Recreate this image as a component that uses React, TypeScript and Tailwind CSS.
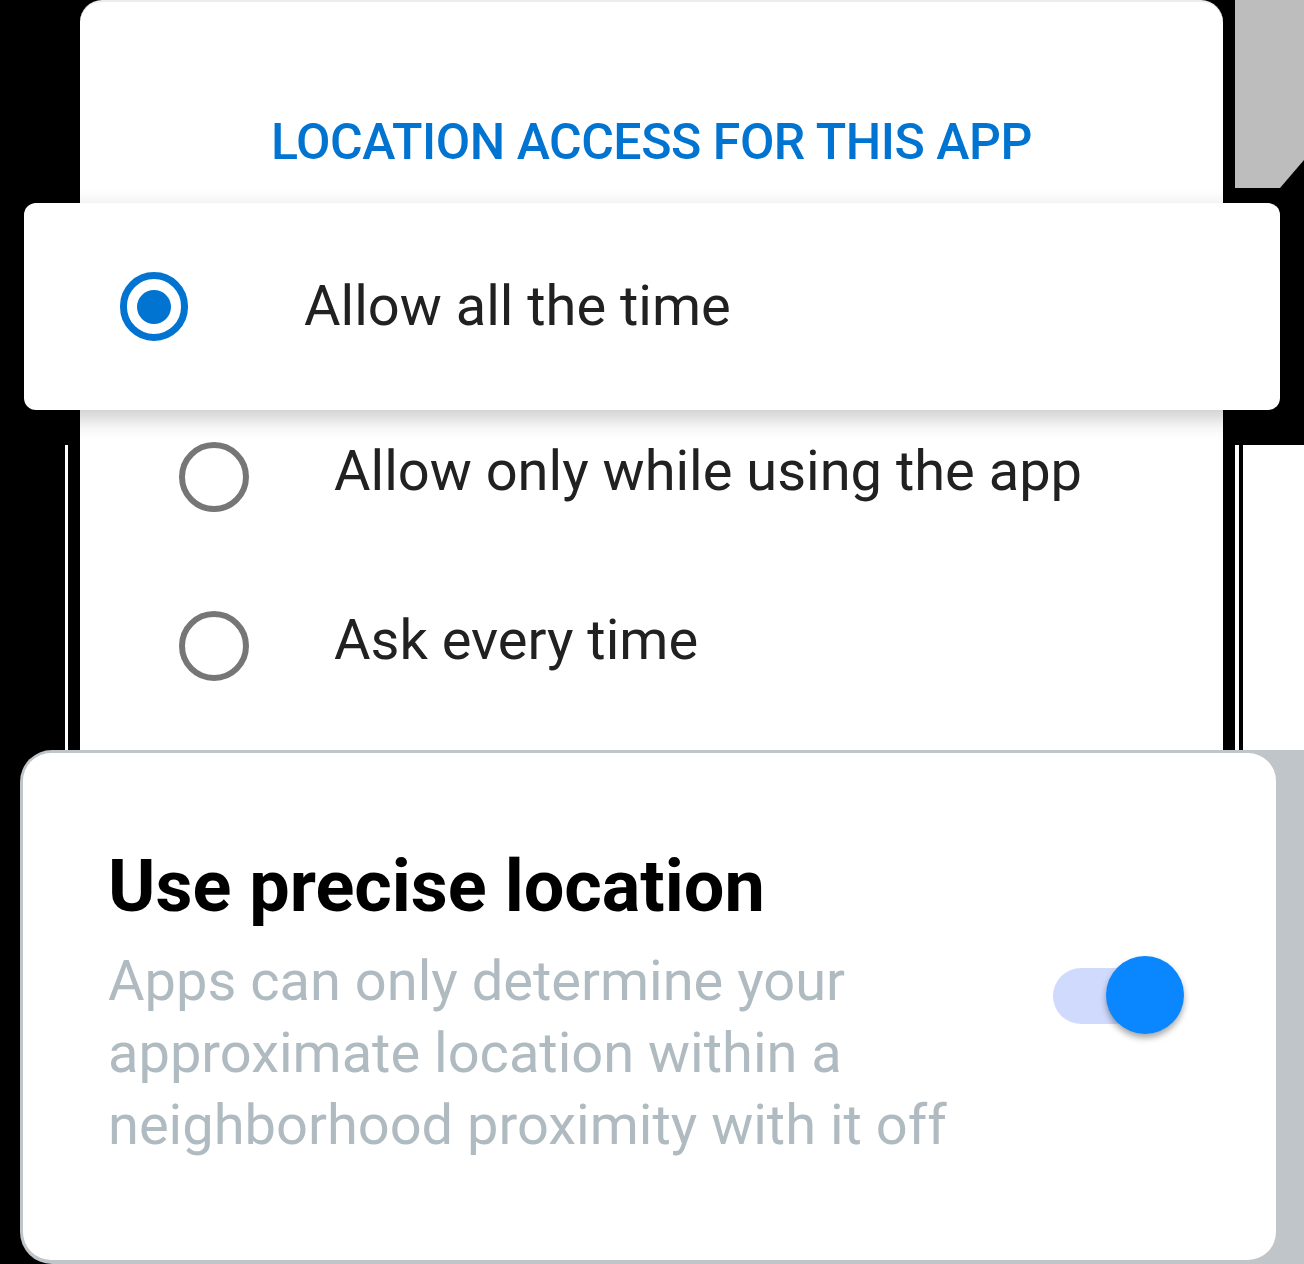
import React from 'react'

function Radio({ checked }: { checked?: boolean }) {
  if (checked) {
    return (
      <div className="w-[68px] h-[69px] rounded-full border-[7px] border-[#0074d0] flex items-center justify-center shrink-0">
        <div className="w-[34px] h-[34px] rounded-full bg-[#0074d0]" />
      </div>
    )
  }
  return <div className="w-[70px] h-[70px] rounded-full border-[6px] border-[#767676] shrink-0" />
}

function Toggle() {
  return (
    <div className="relative w-[131px] h-[80px] shrink-0">
      <div className="absolute left-0 top-[12px] w-[90px] h-[56px] rounded-full bg-[#d0dafc]" />
      <div className="absolute right-0 top-0 w-[78px] h-[78px] rounded-full bg-[#0a86ff] shadow-[0_4px_6px_rgba(0,0,0,0.35)]" />
    </div>
  )
}

export default function App() {
  return (
    <div className="w-[1304px] h-[1264px] bg-black overflow-hidden font-['Roboto',sans-serif] flex flex-col">
      {/* Header band */}
      <div className="flex h-[203px] shrink-0">
        <div className="w-[80px] shrink-0" />
        <div className="w-[1143px] shrink-0 bg-white rounded-t-[22px] border-t-2 border-[#ededed] pt-[115px] flex justify-center">
          <h2 className="text-[50px] leading-none font-medium tracking-[-0.45px] text-[#0074d0]">LOCATION ACCESS FOR THIS APP</h2>
        </div>
        <div className="w-[12px] shrink-0" />
        <div className="w-[69px] shrink-0">
          <div className="h-[188px] bg-[#bdbdbd] [clip-path:polygon(0_0,100%_0,100%_160px,45px_188px,0_188px)]" />
        </div>
      </div>

      {/* Selected option */}
      <div className="px-6 h-[207px] shrink-0 relative z-10">
        <div className="h-full bg-white rounded-[12px] shadow-[0_8px_22px_rgba(0,0,0,0.22)] flex items-start pt-[69px] pl-[96px]">
          <Radio checked />
          <span className="ml-[116px] mt-[6px] text-[56px] leading-none text-[#212121]">Allow all the time</span>
        </div>
      </div>

      {/* Other options */}
      <div className="flex h-[340px] shrink-0">
        <div className="w-[80px] shrink-0 flex flex-col">
          <div className="h-[35px]" />
          <div className="flex-1 ml-[65px] w-[3px] bg-white" />
        </div>
        <div className="w-[1143px] shrink-0 bg-white flex flex-col pt-[32px] pl-[99px]">
          <div className="flex items-start">
            <Radio />
            <span className="ml-[85px] mt-[1px] text-[56px] leading-none text-[#212121]">Allow only while using the app</span>
          </div>
          <div className="flex items-start mt-[99px]">
            <Radio />
            <span className="ml-[85px] mt-[1px] text-[56px] leading-none text-[#212121]">Ask every time</span>
          </div>
        </div>
        <div className="w-[81px] shrink-0 flex flex-col">
          <div className="h-[35px]" />
          <div className="flex-1 flex">
            <div className="w-[12px]" />
            <div className="w-[4px] bg-white" />
            <div className="w-[4px]" />
            <div className="flex-1 bg-white" />
          </div>
        </div>
      </div>

      {/* Precise location card */}
      <div className="flex-1 ml-[20px] bg-[#c0c5c9] rounded-l-[32px] pt-[3px] pl-[3px] pb-[4px]">
        <div className="w-[1253px] h-full bg-white rounded-[28px] flex justify-between pl-[85px] pr-[92px] pt-[98px]">
          <div className="flex flex-col">
            <h3 className="text-[72px] leading-none font-bold text-black">Use precise location</h3>
            <p className="mt-[22px] text-[56px] leading-[72px] text-[#afbbc1]">
              Apps can only determine your
              <br />
              approximate location within a
              <br />
              neighborhood proximity with it off
            </p>
          </div>
          <div className="mt-[105px]">
            <Toggle />
          </div>
        </div>
      </div>
    </div>
  )
}
